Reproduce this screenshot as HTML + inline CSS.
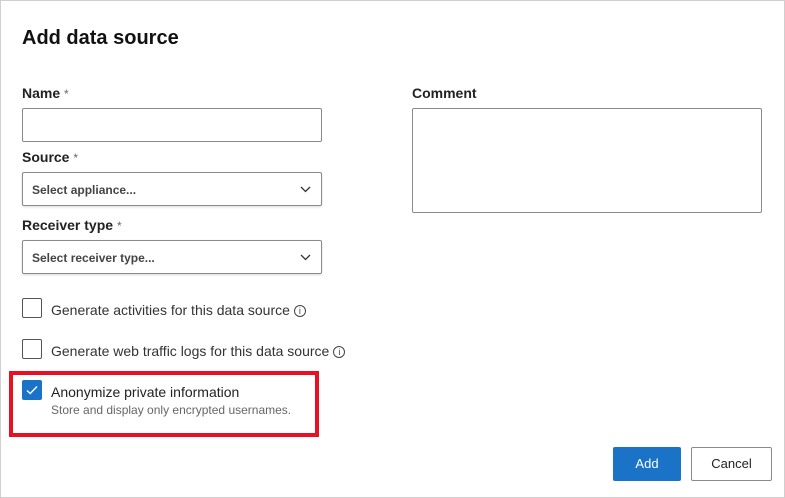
<!DOCTYPE html>
<html><head><style>
*{box-sizing:border-box;margin:0;padding:0}
body{width:785px;height:498px;background:#fff;font-family:"Liberation Sans",sans-serif;color:#1b1b1b;position:relative;overflow:hidden}
.frame{position:absolute;left:0;top:0;width:785px;height:498px;border:1px solid #cfcfcf}
.a{position:absolute}
h1{position:absolute;left:22px;top:27px;font-size:20px;font-weight:bold;color:#111}
.lbl{font-size:14px;font-weight:bold;color:#222}
.lbl span{font-weight:normal;color:#666;font-size:12px}
.box{border:1px solid #8a8a8a;border-radius:2px;background:#fff}
.sel{border:1px solid #8a8a8a;border-radius:2px;box-shadow:0 1px 2px rgba(0,0,0,.15);font-size:12px;font-weight:bold;color:#444;padding:10px 9px}
.chev{position:absolute;right:10px;top:12px}
.cb{width:20px;height:20px;border:1px solid #555;border-radius:2px}
.ct{font-size:14px;color:#333}
.info{display:inline-block;width:12px;height:12px;border:1px solid #444;border-radius:50%;font-size:9px;line-height:10px;text-align:center;vertical-align:1px;margin-left:4px;color:#444}
.btn{position:absolute;top:447px;height:34px;border-radius:2px;font-size:13px;text-align:center;line-height:32px}
</style></head><body>
<div class="frame"></div>
<h1>Add data source</h1>
<div class="a lbl" style="left:22px;top:85px">Name <span>*</span></div>
<div class="a box" style="left:22px;top:108px;width:300px;height:34px"></div>
<div class="a lbl" style="left:22px;top:149px">Source <span>*</span></div>
<div class="a sel" style="left:22px;top:172px;width:300px;height:34px">Select appliance...<svg class="chev" width="11" height="8" viewBox="0 0 11 8"><path d="M1 2l4.5 4.5L10 2" fill="none" stroke="#333" stroke-width="1.3"/></svg></div>
<div class="a lbl" style="left:22px;top:217px">Receiver type <span>*</span></div>
<div class="a sel" style="left:22px;top:240px;width:300px;height:34px">Select receiver type...<svg class="chev" width="11" height="8" viewBox="0 0 11 8"><path d="M1 2l4.5 4.5L10 2" fill="none" stroke="#333" stroke-width="1.3"/></svg></div>
<div class="a lbl" style="left:412px;top:85px">Comment</div>
<div class="a box" style="left:412px;top:108px;width:350px;height:105px"></div>
<div class="a cb" style="left:22px;top:298px"></div>
<div class="a ct" style="left:51px;top:302px">Generate activities for this data source<span class="info">i</span></div>
<div class="a cb" style="left:22px;top:339px"></div>
<div class="a ct" style="left:51px;top:343px">Generate web traffic logs for this data source<span class="info">i</span></div>
<div class="a" style="left:9px;top:371px;width:310px;height:66px;border:4px solid #e81123"></div>
<div class="a" style="left:22px;top:380px;width:20px;height:20px;background:#1a73c7;border-radius:2px"><svg width="20" height="20" viewBox="0 0 20 20"><path d="M5 10.5l3.2 3L15 6.5" fill="none" stroke="#fff" stroke-width="1.4"/></svg></div>
<div class="a ct" style="left:51px;top:384px;color:#222">Anonymize private information</div>
<div class="a" style="left:51px;top:403px;font-size:12px;color:#666">Store and display only encrypted usernames.</div>
<div class="btn" style="left:613px;width:68px;background:#1a73c7;color:#fff;line-height:34px">Add</div>
<div class="btn" style="left:691px;width:81px;border:1px solid #8a8a8a;color:#222">Cancel</div>
</body></html>
